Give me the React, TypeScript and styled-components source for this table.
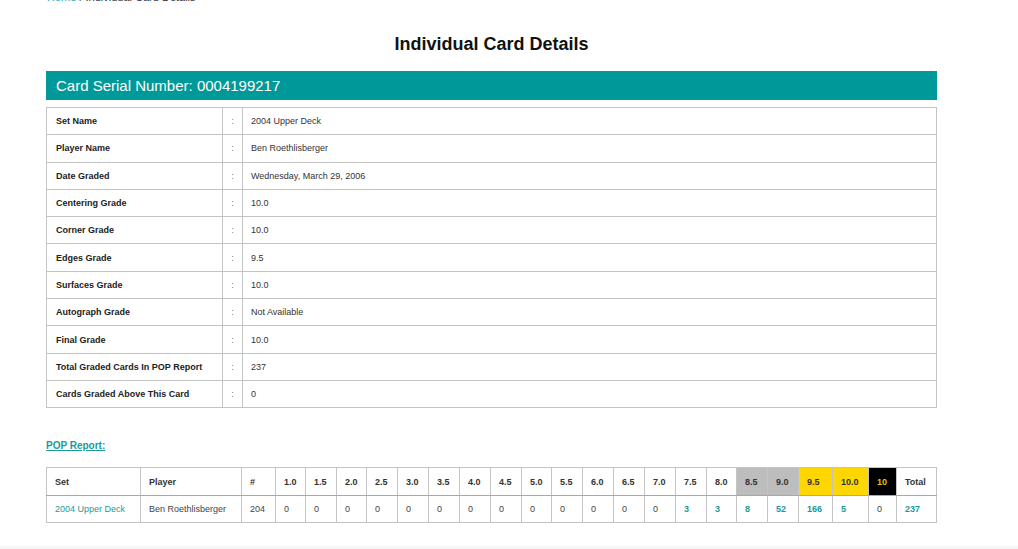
import styled, { createGlobalStyle } from "styled-components";

const GlobalStyle = createGlobalStyle`
  html, body {
    margin: 0;
    padding: 0;
    background: #fff;
    font-family: "Liberation Sans", Arial, sans-serif;
    color: #333;
  }
`;

const details: [string, string][] = [
  ["Set Name", "2004 Upper Deck"],
  ["Player Name", "Ben Roethlisberger"],
  ["Date Graded", "Wednesday, March 29, 2006"],
  ["Centering Grade", "10.0"],
  ["Corner Grade", "10.0"],
  ["Edges Grade", "9.5"],
  ["Surfaces Grade", "10.0"],
  ["Autograph Grade", "Not Available"],
  ["Final Grade", "10.0"],
  ["Total Graded Cards In POP Report", "237"],
  ["Cards Graded Above This Card", "0"],
];

type Tone = "plain" | "silver" | "gold" | "black";

type GradeCol = { label: string; count: number; width: number; tone: Tone };

const gradeCols: GradeCol[] = [
  { label: "1.0", count: 0, width: 30, tone: "plain" },
  { label: "1.5", count: 0, width: 31, tone: "plain" },
  { label: "2.0", count: 0, width: 30, tone: "plain" },
  { label: "2.5", count: 0, width: 31, tone: "plain" },
  { label: "3.0", count: 0, width: 31, tone: "plain" },
  { label: "3.5", count: 0, width: 31, tone: "plain" },
  { label: "4.0", count: 0, width: 31, tone: "plain" },
  { label: "4.5", count: 0, width: 31, tone: "plain" },
  { label: "5.0", count: 0, width: 30, tone: "plain" },
  { label: "5.5", count: 0, width: 31, tone: "plain" },
  { label: "6.0", count: 0, width: 31, tone: "plain" },
  { label: "6.5", count: 0, width: 31, tone: "plain" },
  { label: "7.0", count: 0, width: 31, tone: "plain" },
  { label: "7.5", count: 3, width: 31, tone: "plain" },
  { label: "8.0", count: 3, width: 30, tone: "plain" },
  { label: "8.5", count: 8, width: 31, tone: "silver" },
  { label: "9.0", count: 52, width: 31, tone: "silver" },
  { label: "9.5", count: 166, width: 34, tone: "gold" },
  { label: "10.0", count: 5, width: 36, tone: "gold" },
  { label: "10", count: 0, width: 28, tone: "black" },
];

const toneBg: Record<Tone, string> = {
  plain: "#fff",
  silver: "#bdbdbd",
  gold: "#ffd700",
  black: "#000",
};

const App = () => {
  return (
    <>
      <GlobalStyle />
      <Page>
        <Breadcrumb>
          <CrumbLink>Home</CrumbLink> / Individual Card Details
        </Breadcrumb>
        <Title>Individual Card Details</Title>

        <SerialBar>Card Serial Number: 0004199217</SerialBar>
        <DetailTable>
          <tbody>
            {details.map(([label, value]) => (
              <tr key={label}>
                <LabelCell>{label}</LabelCell>
                <ColonCell>:</ColonCell>
                <ValueCell>{value}</ValueCell>
              </tr>
            ))}
          </tbody>
        </DetailTable>

        <PopHeading>POP Report:</PopHeading>
        <PopTable>
          <colgroup>
            <col style={{ width: 94 }} />
            <col style={{ width: 101 }} />
            <col style={{ width: 34 }} />
            {gradeCols.map((g) => (
              <col key={g.label} style={{ width: g.width }} />
            ))}
            <col style={{ width: 40 }} />
          </colgroup>
          <thead>
            <tr>
              <HeadCell $tone="plain">Set</HeadCell>
              <HeadCell $tone="plain">Player</HeadCell>
              <HeadCell $tone="plain">#</HeadCell>
              {gradeCols.map((g) => (
                <HeadCell key={g.label} $tone={g.tone}>
                  {g.label}
                </HeadCell>
              ))}
              <HeadCell $tone="plain">Total</HeadCell>
            </tr>
          </thead>
          <tbody>
            <tr>
              <DataCell>
                <SetLink>2004 Upper Deck</SetLink>
              </DataCell>
              <DataCell>Ben Roethlisberger</DataCell>
              <DataCell>204</DataCell>
              {gradeCols.map((g) => (
                <DataCell key={g.label} $linked={g.count > 0}>
                  {g.count}
                </DataCell>
              ))}
              <DataCell $linked>237</DataCell>
            </tr>
          </tbody>
        </PopTable>
      </Page>
      <Footer />
    </>
  );
};

export default App;

const Page = styled.div`
  width: 891px;
  padding-left: 46px;
  display: flex;
  flex-direction: column;
`;

// the page is scrolled a little: only the foot of the breadcrumb shows
const Breadcrumb = styled.div`
  margin-top: -9px;
  height: 13px;
  font-size: 11px;
  line-height: 13px;
  color: #333;
  padding-left: 1px;
`;

const CrumbLink = styled.span`
  color: #17a2b8;
`;

const Title = styled.h1`
  margin: 29px 0 0;
  height: 22px;
  font-size: 18px;
  line-height: 22px;
  font-weight: 700;
  color: #111;
  text-align: center;
`;

const SerialBar = styled.div`
  margin-top: 16px;
  height: 29px;
  background: #009999;
  color: #fff;
  font-size: 15px;
  line-height: 29px;
  padding-left: 10px;
  box-sizing: border-box;
`;

const DetailTable = styled.table`
  margin-top: 7px;
  width: 891px;
  border-collapse: collapse;
  border: 1px solid #a8a8a8;
  font-size: 9px;

  td {
    height: 26.3px;
    border: 1px solid #c4c4c4;
    padding: 0 9px;
    vertical-align: middle;
  }
`;

const LabelCell = styled.td`
  width: 157px;
  font-weight: 700;
  color: #222;
`;

const ColonCell = styled.td`
  && {
    width: 19px;
    padding: 0;
  }
  text-align: center;
  color: #777;
`;

const ValueCell = styled.td`
  && {
    padding-left: 8px;
  }
  color: #333;
`;

const PopHeading = styled.div`
  margin-top: 31px;
  height: 14px;
  font-size: 10px;
  line-height: 14px;
  font-weight: 700;
  color: #1a9a9a;
  text-decoration: underline;
`;

const PopTable = styled.table`
  margin-top: 14px;
  width: 891px;
  table-layout: fixed;
  border-collapse: collapse;
  border: 1px solid #a8a8a8;
  font-size: 9px;
`;

const HeadCell = styled.th<{ $tone: Tone }>`
  height: 27px;
  padding: 0 0 0 8px;
  text-align: left;
  font-weight: 700;
  white-space: nowrap;
  border: 1px solid #c4c4c4;
  border-bottom-color: #a8a8a8;
  background: ${({ $tone }) => toneBg[$tone]};
  color: ${({ $tone }) => ($tone === "black" ? "#e6c200" : "#333")};
`;

const DataCell = styled.td<{ $linked?: boolean }>`
  height: 26px;
  padding: 0 0 0 8px;
  white-space: nowrap;
  border: 1px solid #c4c4c4;
  color: ${({ $linked }) => ($linked ? "#1a9a9a" : "#444")};
  font-weight: ${({ $linked }) => ($linked ? 700 : 400)};
`;

const SetLink = styled.span`
  color: #1a9a9a;
`;

const Footer = styled.div`
  margin-top: 23px;
  height: 3px;
  background: #f6f6f6;
`;
